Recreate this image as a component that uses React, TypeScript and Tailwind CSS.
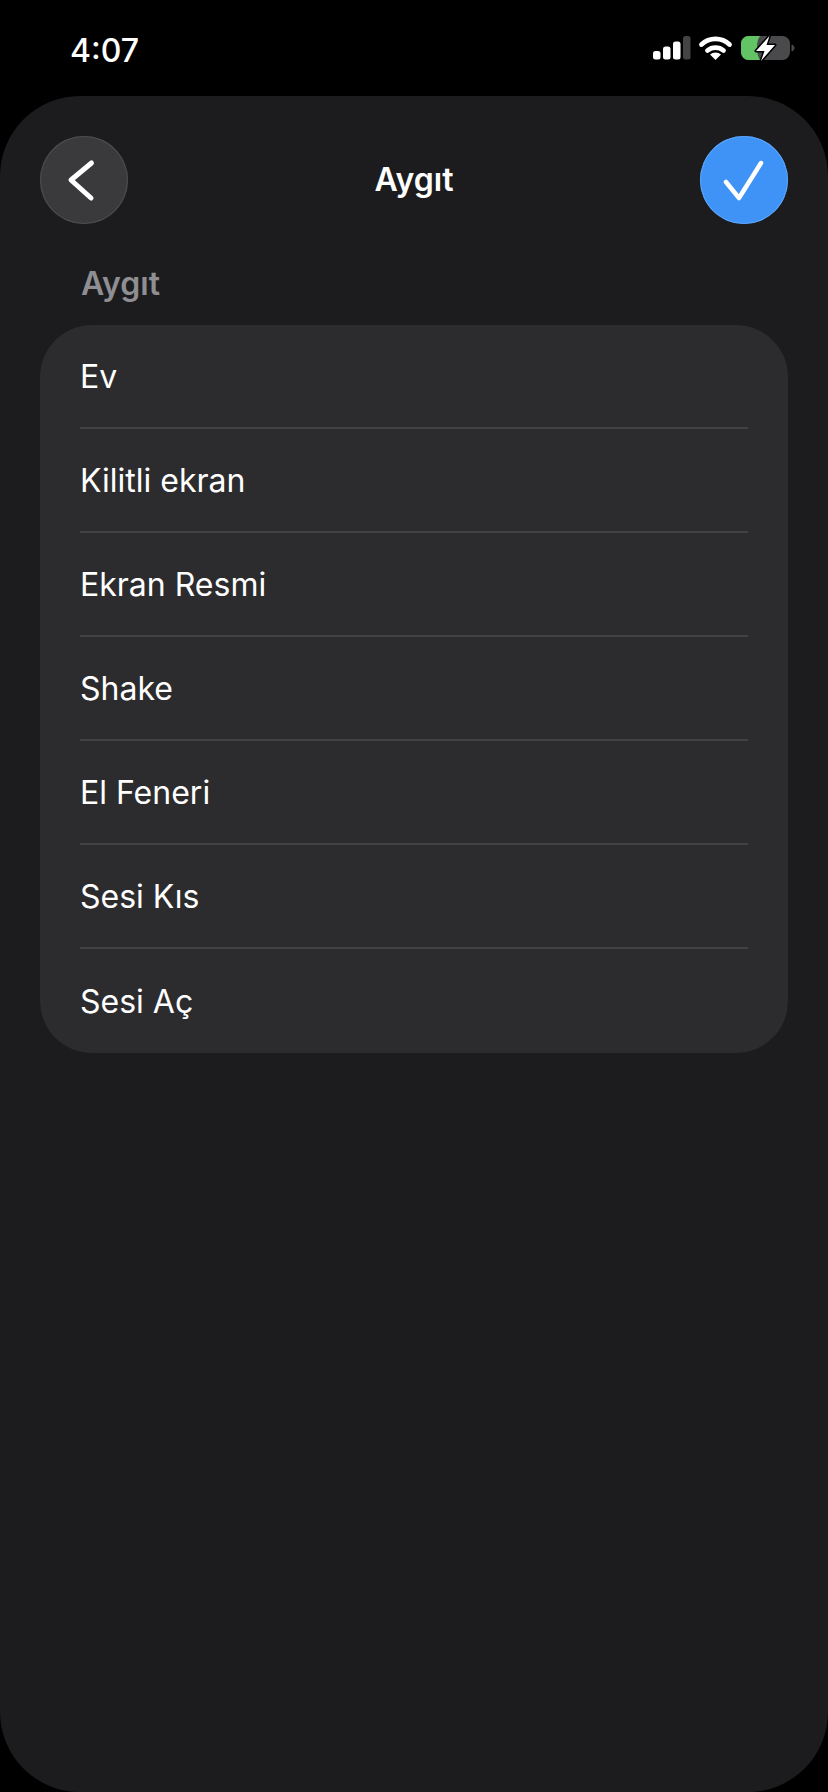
const rows = ["Ev", "Kilitli ekran", "Ekran Resmi", "Shake", "El Feneri", "Sesi Kıs", "Sesi Aç"];

function StatusIcons() {
  return (
    <svg width="146" height="30" viewBox="650 35 146 30" fill="none">
      <rect x="653" y="53" width="7.500" height="8.500" rx="2.500" fill="#fff" />
      <rect x="663" y="48.500" width="7.500" height="13" rx="2.500" fill="#fff" />
      <rect x="673" y="43.500" width="7.500" height="18" rx="2.500" fill="#fff" />
      <rect x="683" y="38" width="7.500" height="23.500" rx="2.500" fill="#444446" />
      <path d="M701.500 46.500a20.500 20.500 0 0 1 28 0" stroke="#fff" strokeWidth="4.800" strokeLinecap="round" />
      <path d="M707.500 52.500a12.500 12.500 0 0 1 16 0" stroke="#fff" strokeWidth="4.800" strokeLinecap="round" />
      <path d="M710 56.500a8.500 8.500 0 0 1 11 0L715.500 62Z" fill="#fff" />
      <rect x="741" y="38" width="49" height="24" rx="7.500" fill="#4a4a4c" />
      <path d="M748.500 38H760c-2 3-3 6-3 12s1.500 9 3 12h-11.500a7.500 7.500 0 0 1-7.500-7.500v-9a7.500 7.500 0 0 1 7.500-7.500Z" fill="#63c466" />
      <path d="M791.500 46.500c2 .6 3 2 3 3.500s-1 2.900-3 3.500Z" fill="#4a4a4c" />
      <path d="M769.500 38 756 53h8.500L761 63l14-16h-8.500Z" fill="#fff" stroke="#000" strokeWidth="3" strokeLinejoin="round" paintOrder="stroke" />
    </svg>
  );
}

export default function App() {
  return (
    <div className="flex h-[1792px] w-[828px] flex-col overflow-hidden bg-black font-['Inter','Noto_Sans',sans-serif] text-white">
      <div className="flex h-24 shrink-0 items-center justify-between pt-[5px] pl-[70px] pr-8">
        <span className="text-[32px] leading-none font-medium">4:07</span>
        <div className="-mt-[5px] flex">
          <StatusIcons />
        </div>
      </div>

      <div className="flex-1 rounded-[80px] bg-[#1c1c1e] px-10 pt-10">
        <div className="flex items-center justify-between">
          <button className="flex h-[88px] w-[88px] items-center justify-center rounded-full bg-[#3a3a3c] shadow-[inset_0_0_0_1px_#4e4e50]">
            <svg width="88" height="88" viewBox="0 0 88 88" fill="none">
              <path d="M51.500 27 31 44l20 18" stroke="#fff" strokeWidth="5" strokeLinecap="round" strokeLinejoin="round" />
            </svg>
          </button>
          <h1 className="text-[32px] leading-none font-semibold">Aygıt</h1>
          <button className="flex h-[88px] w-[88px] items-center justify-center rounded-full bg-[#3f92f6] shadow-[inset_0_0_0_1px_#5aa5f8]">
            <svg width="88" height="88" viewBox="0 0 88 88" fill="none">
              <path d="M26 46l13 16 22-35" stroke="#fff" strokeWidth="4.500" strokeLinecap="round" strokeLinejoin="round" />
            </svg>
          </button>
        </div>

        <div className="mt-[41px] pl-[41px] text-[32px] leading-[38px] font-semibold text-[#8e8e93]">Aygıt</div>

        <div className="mt-[22px] overflow-hidden rounded-[52px] bg-[#2c2c2e]">
          {rows.map((row, i) => (
            <div key={row} className="px-10">
              <div className={`flex h-[104px] items-center pt-[2px] ${i < rows.length - 1 ? "border-b-2 border-[#424244]" : ""}`}>
                <span className="text-[32px] leading-none">{row}</span>
              </div>
            </div>
          ))}
        </div>
      </div>
    </div>
  );
}
